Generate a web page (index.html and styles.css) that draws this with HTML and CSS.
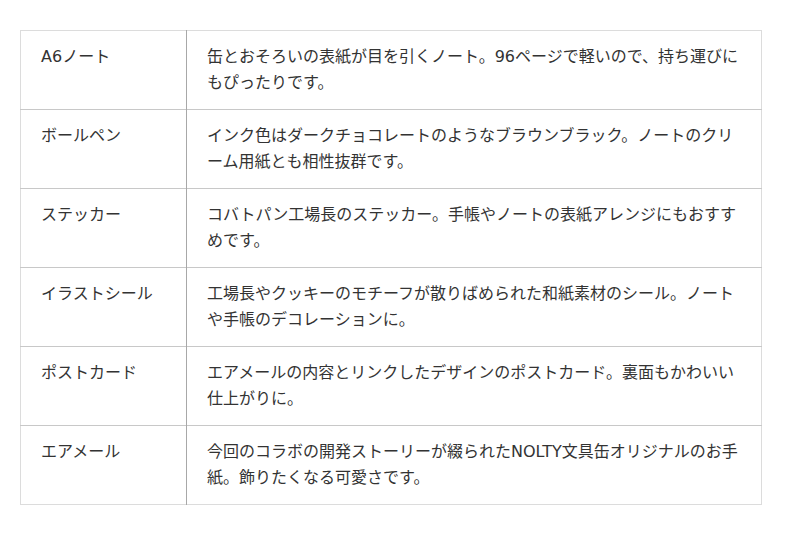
FILE: index.html
```html
<!DOCTYPE html>
<html lang="ja">
<head>
<meta charset="utf-8">
<link rel="stylesheet" href="styles.css">
</head>
<body>
<div class="wrap">
<table class="spec">
<tbody>
<tr><th>A6ノート</th><td>缶とおそろいの表紙が目を引くノート。96ページで軽いので、持ち運びにもぴったりです。</td></tr>
<tr><th>ボールペン</th><td>インク色はダークチョコレートのようなブラウンブラック。ノートのクリーム用紙とも相性抜群です。</td></tr>
<tr><th>ステッカー</th><td>コバトパン工場長のステッカー。手帳やノートの表紙アレンジにもおすすめです。</td></tr>
<tr><th>イラストシール</th><td>工場長やクッキーのモチーフが散りばめられた和紙素材のシール。ノートや手帳のデコレーションに。</td></tr>
<tr><th>ポストカード</th><td>エアメールの内容とリンクしたデザインのポストカード。裏面もかわいい仕上がりに。</td></tr>
<tr><th>エアメール</th><td>今回のコラボの開発ストーリーが綴られたNOLTY文具缶オリジナルのお手紙。飾りたくなる可愛さです。</td></tr>
</tbody>
</table>
</div>
</body>
</html>
```
FILE: styles.css
```css
html, body {
  margin: 0;
  padding: 0;
  background: #fff;
}
.wrap {
  padding: 30px 0 0 20px;
}
.spec {
  border-collapse: collapse;
  width: 742px;
  border: 1px solid #dcdcdc;
  font-family: "DejaVu Sans", "Noto Sans CJK JP", sans-serif;
  font-size: 16px;
  line-height: 26px;
  color: #333;
}
.spec tr {
  border-bottom: 1px solid #c8c8c8;
}
.spec tr:last-child {
  border-bottom: 1px solid #dcdcdc;
}
.spec th {
  width: 125px;
  text-align: left;
  font-weight: normal;
  vertical-align: top;
  padding: 13px 20px 13px 20px;
  border-right: 1px solid #a8a8a8;
}
.spec td {
  vertical-align: top;
  padding: 13px 20px 13px 20px;
}
```
